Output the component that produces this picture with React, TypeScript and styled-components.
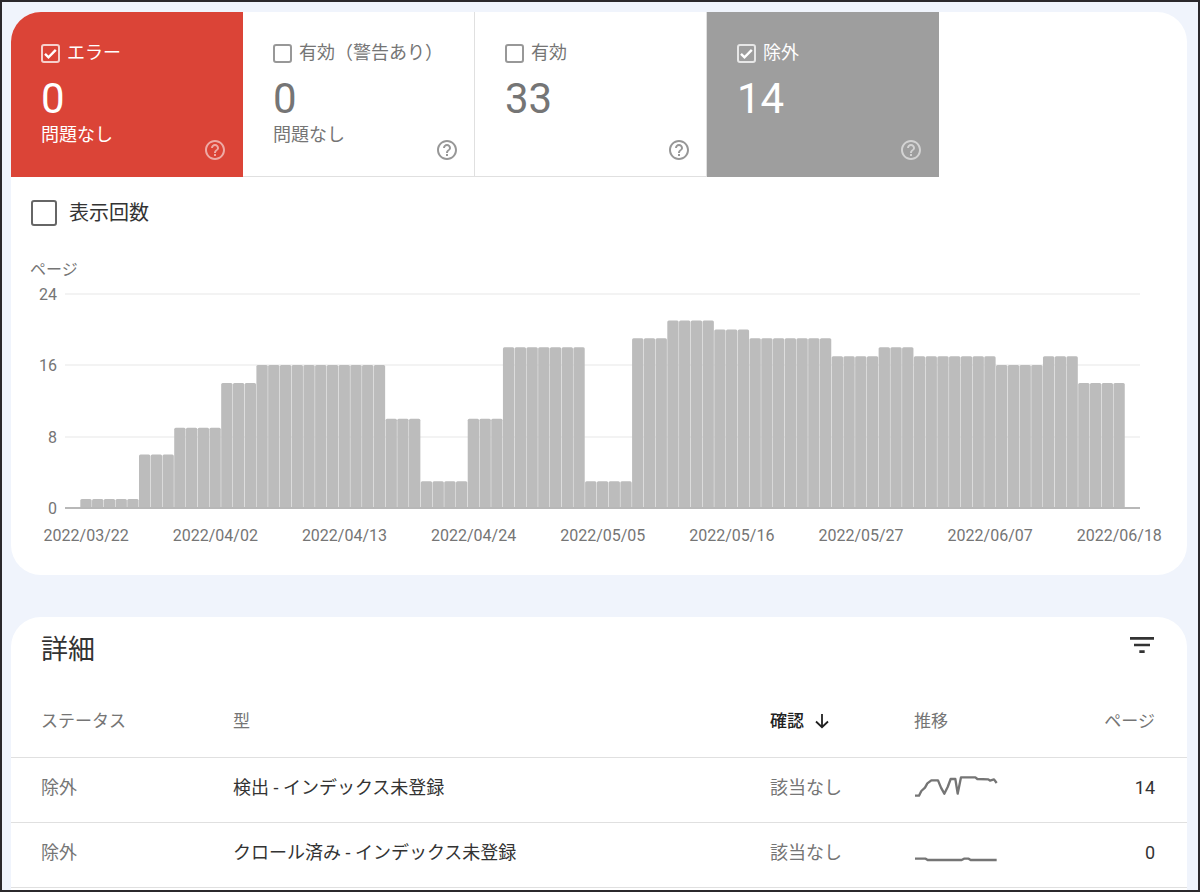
import React, { useState } from "react";
import styled, { createGlobalStyle } from "styled-components";
import { MdFilterList, MdHelpOutline } from "react-icons/md";

const GlobalStyle = createGlobalStyle`
  *, *::before, *::after { box-sizing: border-box; }
  body {
    margin: 0;
    background: #f0f4fc;
    color: #333333;
    font-family: Roboto, "Noto Sans CJK JP", sans-serif;
    font-size: 18px;
  }
  button, input { font: inherit; color: inherit; margin: 0; }
`;

const Frame = styled.main`
  min-height: 100vh;
  padding: 10px 11px 0 9px;
  border: 2px solid #2b292c;
  background: #f0f4fc;
  display: flex;
  flex-direction: column;
  gap: 42px;
`;

const Card = styled.section<{ $open?: boolean }>`
  background: #ffffff;
  border-radius: ${(p) => (p.$open ? "30px 30px 0 0" : "30px")};
  overflow: hidden;
  flex: ${(p) => (p.$open ? "1 0 auto" : "none")};
`;

const Tiles = styled.div`
  display: flex;
`;

type Tone = "error" | "plain" | "excluded";

const toneBackground: Record<Tone, string> = {
  error: "#db4437",
  plain: "#ffffff",
  excluded: "#9e9e9e",
};

const Tile = styled.div<{ $tone: Tone }>`
  flex: 0 1 232px;
  min-width: 0;
  height: 165px;
  padding: 28px 15px 14px 30px;
  display: flex;
  background: ${(p) => toneBackground[p.$tone]};
  color: ${(p) => (p.$tone === "plain" ? "#757575" : "#ffffff")};
  border-style: solid;
  border-width: 0 1px 1px 0;
  border-color: ${(p) => (p.$tone === "plain" ? "#e0e0e0" : toneBackground[p.$tone])};
`;

const TileBody = styled.div`
  flex: 1;
  min-width: 0;
  white-space: nowrap;
`;

const CheckLabel = styled.label<{ $large?: boolean }>`
  display: flex;
  align-items: center;
  gap: ${(p) => (p.$large ? "12px" : "7px")};
  font-size: ${(p) => (p.$large ? "20px" : "18px")};
  line-height: 26px;
`;

const CheckWrap = styled.span<{ $size: number }>`
  flex: none;
  display: grid;
  width: ${(p) => p.$size}px;
  height: ${(p) => p.$size}px;

  > * { grid-area: 1 / 1; }
`;

const CheckInput = styled.input`
  appearance: none;
  width: 100%;
  height: 100%;
  border: 2px solid currentColor;
  border-radius: 3px;
  opacity: 0.75;
`;

const CheckMark = styled.svg`
  width: 100%;
  height: 100%;
  pointer-events: none;
`;

const Count = styled.div`
  margin-top: 9px;
  font-size: 42px;
  line-height: 48px;
`;

const Status = styled.div`
  line-height: 24px;
`;

const IconButton = styled.button`
  flex: none;
  display: flex;
  padding: 0;
  border: 0;
  background: none;
`;

const HelpButton = styled(IconButton)<{ $faint?: boolean }>`
  align-self: flex-end;
  opacity: ${(p) => (p.$faint ? 0.55 : 0.75)};
`;

const ImpressionsRow = styled.div`
  padding: 23px 20px 1px;
`;

const Chart = styled.svg`
  display: block;
  width: 100%;
  height: auto;
  font-size: 16px;
  fill: #757575;
`;

const DetailsHeader = styled.header`
  display: flex;
  justify-content: space-between;
  height: 67px;
  padding: 12px 29px 0 30px;
`;

const Title = styled.h2`
  margin: 0;
  font-size: 27px;
  font-weight: 400;
  line-height: 42px;
`;

const FilterButton = styled(IconButton)`
  align-self: flex-start;
`;

const Table = styled.table`
  width: 100%;
  table-layout: fixed;
  border-spacing: 0;
  text-align: left;
`;

const Column = styled.col<{ $width?: number }>`
  width: ${(p) => (p.$width ? `${p.$width}px` : "auto")};
`;

const HeadCell = styled.th<{ $end?: boolean }>`
  height: 74px;
  padding: 0 ${(p) => (p.$end ? "32px" : "0")} 0 0;
  border-bottom: 1px solid #e0e0e0;
  color: #757575;
  font-size: 17px;
  font-weight: 400;
  line-height: 26px;
  text-align: ${(p) => (p.$end ? "right" : "left")};

  &:first-child { padding-left: 30px; }
`;

const Cell = styled.td<{ $muted?: boolean; $end?: boolean }>`
  height: 65px;
  padding: 0 ${(p) => (p.$end ? "32px" : "0")} 5px 0;
  border-bottom: 1px solid #e0e0e0;
  color: ${(p) => (p.$muted ? "#757575" : "#333333")};
  line-height: 26px;
  text-align: ${(p) => (p.$end ? "right" : "left")};

  &:first-child { padding-left: 30px; }
`;

const SortButton = styled.button`
  display: flex;
  align-items: center;
  gap: 10px;
  padding: 0;
  border: 0;
  background: none;
  color: #212121;
  font-weight: 500;
`;

const Spark = styled.svg`
  display: block;
  width: 84px;
  height: 32px;
`;

function Checkbox({ size, checked, onChange }: { size: number; checked: boolean; onChange: (v: boolean) => void }) {
  return (
    <CheckWrap $size={size}>
      <CheckInput type="checkbox" checked={checked} onChange={(e) => onChange(e.target.checked)} />
      {checked && (
        <CheckMark viewBox="0 0 19 19" aria-hidden="true">
          <path d="M4 9.8 7.5 13.3 14.8 5.8" fill="none" stroke="currentColor" strokeWidth="2.4" />
        </CheckMark>
      )}
    </CheckWrap>
  );
}

type TileData = { label: string; count: number; status?: string; tone: Tone; checked: boolean };

const tiles: TileData[] = [
  { label: "エラー", count: 0, status: "問題なし", tone: "error", checked: true },
  { label: "有効（警告あり）", count: 0, status: "問題なし", tone: "plain", checked: false },
  { label: "有効", count: 33, tone: "plain", checked: false },
  { label: "除外", count: 14, tone: "excluded", checked: true },
];

function SummaryTile({ data }: { data: TileData }) {
  const [checked, setChecked] = useState(data.checked);
  return (
    <Tile $tone={data.tone}>
      <TileBody>
        <CheckLabel>
          <Checkbox size={19} checked={checked} onChange={setChecked} />
          {data.label}
        </CheckLabel>
        <Count>{data.count}</Count>
        {data.status && <Status>{data.status}</Status>}
      </TileBody>
      <HelpButton type="button" aria-label="ヘルプ" $faint={data.tone !== "plain"}>
        <MdHelpOutline size={24} />
      </HelpButton>
    </Tile>
  );
}

// Excluded pages per day, as [days, pages] runs.
const runs = [
  [5, 1], [3, 6], [4, 9], [3, 14], [11, 16], [3, 10], [4, 3], [3, 10], [7, 18], [4, 3],
  [3, 19], [4, 21], [3, 20], [7, 19], [4, 17], [3, 18], [7, 17], [4, 16], [3, 17], [4, 14],
];
const daily = runs.flatMap(([days, pages]) => Array<number>(days).fill(pages));

const dates = [
  "2022/03/22", "2022/04/02", "2022/04/13", "2022/04/24", "2022/05/05",
  "2022/05/16", "2022/05/27", "2022/06/07", "2022/06/18",
];

const baseY = 281;
const unit = 8.93;
const firstX = 69.3;
const step = 11.74;

function PagesChart() {
  return (
    <Chart viewBox="0 0 1176 348" role="img" aria-label="ページ">
      <text x="19" y="48">ページ</text>
      {[24, 16, 8, 0].map((v) => {
        const y = Math.round(baseY - v * unit);
        return (
          <g key={v}>
            <text x="46" y={y + 6} textAnchor="end">{v}</text>
            {v > 0 && <rect x="54" y={y - 1} width="1075" height="2" fill="#f3f3f3" />}
          </g>
        );
      })}
      {daily.map((v, i) => (
        <rect
          key={i}
          x={firstX + i * step}
          y={baseY - v * unit}
          width={step - 0.4}
          height={v * unit}
          rx="1.5"
          fill="#bcbcbc"
        />
      ))}
      <rect x="54" y={baseY - 1} width="1075" height="2" fill="#b8b8b8" />
      {dates.map((d, i) => (
        <text key={d} x={firstX + (i * 11 + 0.5) * step} y="314" textAnchor="middle">{d}</text>
      ))}
    </Chart>
  );
}

const rows = [
  {
    status: "除外",
    type: "検出 - インデックス未登録",
    check: "該当なし",
    trend: "3,71 15,71 22,57 33,47 40,34 52,25 72,25 81,47 91,65 101,45 110,21 124,21 131,65 141,16 184,16 190,21 223,22 228,26 240,22 248,33",
    pages: 14,
  },
  {
    status: "除外",
    type: "クロール済み - インデックス未登録",
    check: "該当なし",
    trend: "3,65 35,65 41,69 143,69 150,65 164,65 170,69 248,69",
    pages: 0,
  },
];

export default function App() {
  const [impressions, setImpressions] = useState(false);
  return (
    <>
      <GlobalStyle />
      <Frame>
        <Card>
          <Tiles>
            {tiles.map((t) => <SummaryTile key={t.label} data={t} />)}
          </Tiles>
          <ImpressionsRow>
            <CheckLabel $large>
              <Checkbox size={26} checked={impressions} onChange={setImpressions} />
              表示回数
            </CheckLabel>
          </ImpressionsRow>
          <PagesChart />
        </Card>

        <Card $open>
          <DetailsHeader>
            <Title>詳細</Title>
            <FilterButton type="button" aria-label="フィルタ">
              <MdFilterList size={32} />
            </FilterButton>
          </DetailsHeader>
          <Table>
            <colgroup>
              <Column $width={222} />
              <Column />
              <Column $width={144} />
              <Column $width={142} />
              <Column $width={131} />
            </colgroup>
            <thead>
              <tr>
                <HeadCell scope="col">ステータス</HeadCell>
                <HeadCell scope="col">型</HeadCell>
                <HeadCell scope="col" aria-sort="descending">
                  <SortButton type="button">
                    確認
                    <svg width="16" height="16" viewBox="0 0 16 16" fill="none" stroke="currentColor" strokeWidth="1.8" aria-hidden="true">
                      <path d="M8 1V14M2 8.5 8 14.2 14 8.5" />
                    </svg>
                  </SortButton>
                </HeadCell>
                <HeadCell scope="col">推移</HeadCell>
                <HeadCell scope="col" $end>ページ</HeadCell>
              </tr>
            </thead>
            <tbody>
              {rows.map((r) => (
                <tr key={r.type}>
                  <Cell $muted>{r.status}</Cell>
                  <Cell>{r.type}</Cell>
                  <Cell $muted>{r.check}</Cell>
                  <Cell>
                    <Spark viewBox="0 0 252 96" aria-hidden="true">
                      <polyline points={r.trend} fill="none" stroke="#757575" strokeWidth="7" strokeLinejoin="round" />
                    </Spark>
                  </Cell>
                  <Cell $end>{r.pages}</Cell>
                </tr>
              ))}
            </tbody>
          </Table>
        </Card>
      </Frame>
    </>
  );
}
